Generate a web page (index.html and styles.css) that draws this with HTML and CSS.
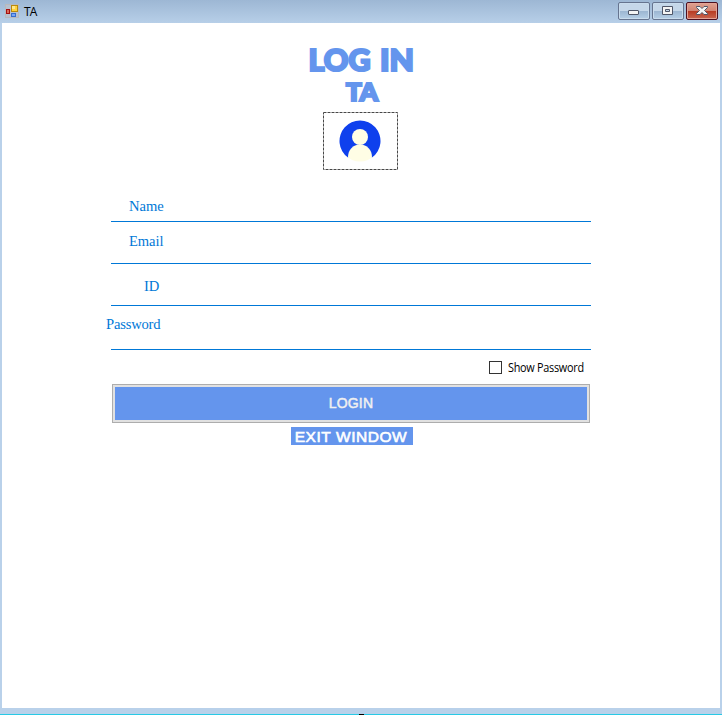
FILE: index.html
```html
<!DOCTYPE html>
<html lang="en">
<head>
<meta charset="utf-8">
<title>TA</title>
<link rel="stylesheet" href="styles.css">
</head>
<body>
<div class="window">
  <header class="titlebar">
    <svg class="app-icon" width="14" height="14" viewBox="0 0 14 14">
      <rect x=".5" y=".5" width="13" height="13" fill="#b8c1cf" stroke="#b7b9bd"/>
      <rect x="6.5" y="1.5" width="6" height="6" fill="#ffd23c" stroke="#b98a0c"/>
      <path d="M7 2h3v3H7z" fill="#ffe78b"/>
      <rect x="1.5" y="5.500" width="3" height="4" fill="#d86a5a" stroke="#a70f0f"/>
      <rect x="6.500" y="9.500" width="4" height="3" fill="#77a6f5" stroke="#356cd0"/>
    </svg>
    <span class="caption">TA</span>
    <div class="controls">
      <button class="ctl" aria-label="Minimize"><svg width="30" height="16" viewBox="0 0 30 16"><rect x="9.500" y="7.500" width="10" height="4" rx=".5" fill="#f4f4f4" stroke="#4f5668"/></svg></button>
      <button class="ctl" aria-label="Maximize"><svg width="30" height="16" viewBox="0 0 30 16"><path d="M9.500 3.500h10v8h-10zM12.500 6.500v2h4v-2z" fill="#f4f4f4" fill-rule="evenodd" stroke="#4f5668"/></svg></button>
      <button class="ctl close" aria-label="Close"><svg width="30" height="16" viewBox="0 0 30 16"><path d="M9.500 3.500h3.500l2 2 2-2h3.500v1l-3 3 3 3v1H17l-2-2-2 2H9.500v-1l3-3-3-3z" fill="#f4f4f4" stroke="#4f5668"/></svg></button>
    </div>
  </header>
  <main class="client">
    <svg class="heading" width="120" height="82" viewBox="0 -10 120 82">
      <text class="big" y="27"><tspan x="7.500" textLength="62" lengthAdjust="spacingAndGlyphs">LOG</tspan> <tspan x="79" textLength="34" lengthAdjust="spacingAndGlyphs">IN</tspan></text>
      <text class="small" x="45" y="57" textLength="32" lengthAdjust="spacingAndGlyphs">TA</text>
    </svg>
    <svg class="avatar" width="75" height="58" viewBox="0 0 75 58">
      <defs><clipPath id="disc"><circle cx="37" cy="29" r="20.500"/></clipPath></defs>
      <rect x=".5" y=".5" width="74" height="57" fill="none" stroke="#484848" stroke-dasharray="3 1"/>
      <path d="M25 45.600A20.500 20.500 0 1 1 49 45.600z" fill="#0f40ed"/>
      <g clip-path="url(#disc)" fill="#fffde5"><circle cx="37" cy="25" r="8"/><path d="M25 51v-6c0-7 5-12.500 12-12.500S49 38 49 45v6z"/></g>
    </svg>
    <form class="form">
      <div class="field name"><label>Name</label></div>
      <div class="field email"><label>Email</label></div>
      <div class="field id"><label>ID</label></div>
      <div class="field password"><label>Password</label></div>
      <label class="show"><span class="box"></span><span class="show-text">Show Password</span></label>
      <button class="login" type="button">LOGIN</button>
      <button class="exit" type="button">EXIT WINDOW</button>
    </form>
  </main>
  <footer class="edge"><span class="mark"></span></footer>
</div>
</body>
</html>
```
FILE: styles.css
```css
* { box-sizing: border-box; }
body { margin: 0; overflow: hidden; background: #b9d1ea; }
button { padding: 0; border: 0; font: inherit; }
svg { display: block; }
.window { width: 722px; height: 715px; display: flex; flex-direction: column; }
.titlebar {
  height: 23px; display: flex; align-items: flex-start;
  padding: 0 4px 0 5px; background: linear-gradient(#9db7d4, #b7cfe8);
}
.app-icon { margin-top: 4px; }
.caption { margin: 4px 0 0 5px; font: 12px/16px "Open Sans", sans-serif; letter-spacing: -.8px; color: #000; }
.controls { display: flex; gap: 2px; margin: 2px 0 0 auto; }
.ctl {
  width: 32px; height: 18px; border: 1px solid #66748f; border-radius: 2px;
  background: linear-gradient(#c5d7e9 0 48%, #9bb5d1 50%, #b6cfe6);
  box-shadow: inset 0 0 0 1px #c9dced;
}
.close {
  border-color: #4d1020; box-shadow: inset 0 0 0 1px #e3a396;
  background: linear-gradient(#dfa292 0, #d28473 48%, #b73a22 50%, #c96650);
}
.client {
  height: 685px; margin: 0 2px; padding-top: 11px; background: #fff;
  display: flex; flex-direction: column; align-items: center;
}
.heading { overflow: visible; }
.heading text { font-family: Lato, sans-serif; font-weight: 900; fill: #6495ed; stroke: #6495ed; }
.big { font-size: 30px; stroke-width: 2.200px; }
.small { font-size: 24.500px; stroke-width: 2.200px; }
.avatar { margin: -4px 0 0 -1px; }
.form { width: 480px; margin-right: 20px; margin-top: 20px; display: flex; flex-direction: column; }
.field { border-bottom: 1px solid #0078d7; font: 14.600px/18px "Liberation Serif", serif; color: #0078d7; }
.name { height: 32px; padding: 7px 0 0 18px; }
.email { height: 42px; padding: 10px 0 0 18px; letter-spacing: -.1px; }
.id { height: 42px; padding: 13px 0 0 33px; }
.password { height: 44px; padding-top: 9px; letter-spacing: -.2px; }
.password label { margin-left: -5px; }
.show { display: flex; align-items: center; align-self: flex-end; height: 34px; padding-right: 7px; gap: 6px; }
.box { width: 13px; height: 13px; border: 1px solid #333; background: #fff; }
.show-text {
  width: 76px; padding-top: 1px; font: 12px/16px "Open Sans", sans-serif; letter-spacing: -.3px;
  white-space: nowrap; color: #000; transform: scaleX(.905); transform-origin: left;
}
.login {
  width: 478px; height: 39px; margin-left: 1px; background: #6495ed;
  border: 1px solid #adadad; box-shadow: inset 0 0 0 2px #e1e1e1;
  font: 14px/35px "Liberation Sans", sans-serif; letter-spacing: .2px; color: #f0f0f0; -webkit-text-stroke: .5px #f0f0f0;
}
.exit {
  width: 122px; height: 18px; margin: 4px 0 0 180px; background: #6495ed; color: #fff;
  font: 15.500px/18px "Liberation Sans", sans-serif; letter-spacing: .55px; -webkit-text-stroke: .6px #fff; white-space: nowrap; padding: 1px 2px 0 0;
}
.edge { height: 7px; border-bottom: 1px solid #28c9e5; position: relative; }
.mark { position: absolute; left: 359px; top: 6px; width: 5px; height: 1px; background: #000; }
```
